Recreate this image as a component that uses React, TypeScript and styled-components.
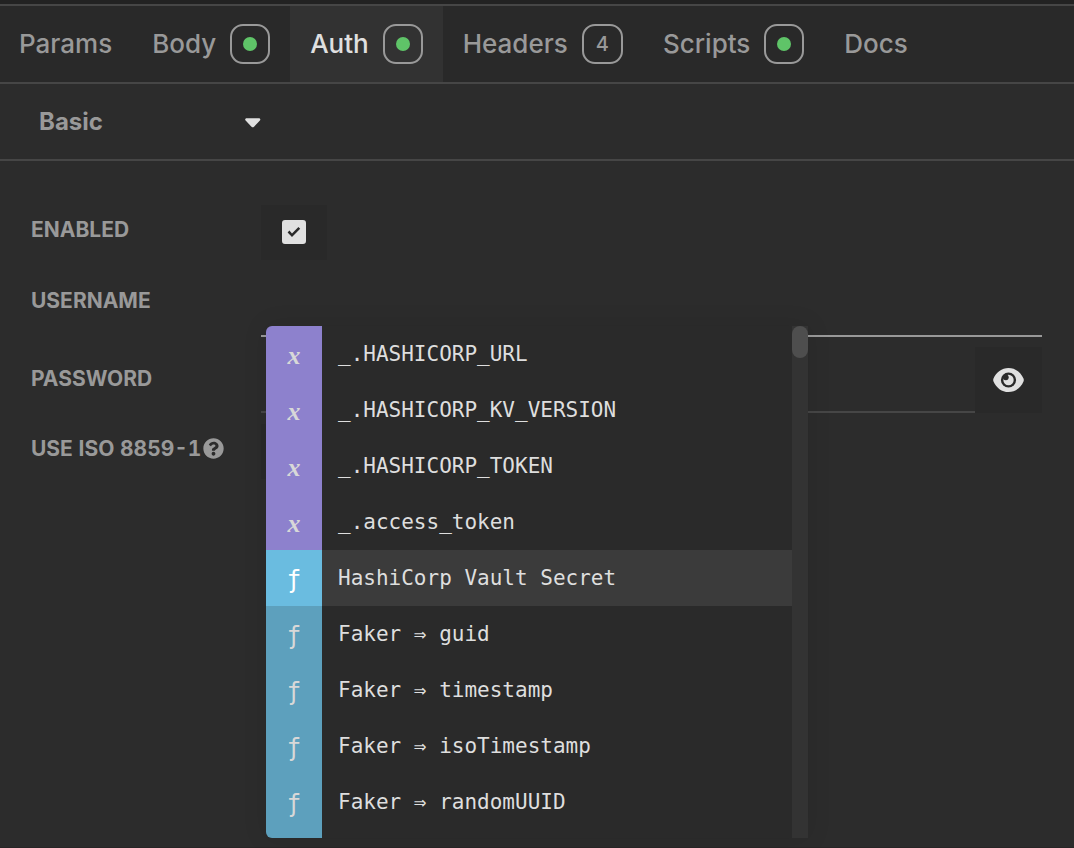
import React from "react";
import styled, { createGlobalStyle } from "styled-components";
import { FaQuestionCircle } from "react-icons/fa";

const ui = `Inter, "Liberation Sans", sans-serif`;
const mono = `"DejaVu Sans Mono", "Liberation Mono", monospace`;

const GlobalStyle = createGlobalStyle`
  *, *::before, *::after { box-sizing: border-box; }
  body { margin: 0; background: #2c2c2c; color: #999; font-family: ${ui}; }
  button, input, select { font: inherit; color: inherit; }
`;

const Pane = styled.main`
  display: flex;
  flex-direction: column;
  min-height: 100vh;
  background: #2c2c2c;
  border-top: 4px solid #222;
  border-bottom: 1px solid #282526;
`;

const TabBar = styled.nav`
  display: flex;
  height: 80px;
  flex: none;
  background: #292929;
  border-top: 2px solid #464646;
  border-bottom: 2px solid #464646;
`;

const Tab = styled.button<{ $active?: boolean }>`
  display: flex;
  align-items: center;
  gap: 14px;
  padding: 0 20px;
  border: 0;
  background: ${(p) => (p.$active ? "#323232" : "transparent")};
  color: ${(p) => (p.$active ? "#e0e0e0" : "#999")};
  font-size: 26px;
  font-weight: 500;
  line-height: 40px;
  white-space: nowrap;
  cursor: pointer;
  &:first-child { padding-left: 19px; }
`;

const Badge = styled.span<{ $count?: boolean }>`
  display: flex;
  align-items: center;
  justify-content: center;
  height: 40px;
  padding: 0 ${(p) => (p.$count ? 12 : 11)}px;
  border: 2px solid #999;
  border-radius: 13px;
  color: #999;
  font-size: 20px;
`;

const Dot = styled.span`
  flex: none;
  width: 14px;
  height: 14px;
  border-radius: 50%;
  background: #5fc468;
`;

const Toolbar = styled.div`
  display: flex;
  align-items: center;
  flex: none;
  height: 77px;
  padding-left: 39px;
  border-bottom: 2px solid #464646;
`;

const SelectWrap = styled.label`
  display: grid;
  grid-template-columns: 206px 16px;
  align-items: center;
`;

const AuthSelect = styled.select`
  grid-area: 1 / 1 / 2 / 3;
  appearance: none;
  padding: 0;
  border: 0;
  background: transparent;
  color: #999;
  font-size: 24px;
  font-weight: 700;
  line-height: 32px;
`;

const Caret = styled.svg`
  grid-area: 1 / 2;
  width: 16px;
  height: 12px;
  fill: #e0e0e0;
  pointer-events: none;
`;

const Form = styled.form`
  display: flex;
  flex-direction: column;
  padding: 44px 32px 0 31px;
`;

const Row = styled.div<{ $height: number; $gap?: number }>`
  display: grid;
  grid-template-columns: 230px 1fr;
  height: ${(p) => p.$height}px;
  margin-bottom: ${(p) => p.$gap ?? 0}px;
`;

const Label = styled.label<{ $height?: number }>`
  display: flex;
  align-items: center;
  align-self: start;
  gap: 2px;
  height: ${(p) => p.$height ?? 49}px;
  font-size: 21px;
  font-weight: 700;
  font-variant-numeric: tabular-nums;
  white-space: nowrap;
`;

const HelpIcon = styled(FaQuestionCircle)`
  width: 21px;
  height: 21px;
`;

const CheckCell = styled.span`
  display: flex;
  align-items: center;
  justify-content: center;
  width: 66px;
  height: 55px;
  padding-bottom: 1px;
  background: #292929;
`;

const Check = styled.input`
  appearance: none;
  width: 24px;
  height: 24px;
  margin: 0;
  border: 2px solid #e0e0e0;
  border-radius: 3px;
  display: grid;
  place-items: center;
  &:checked { background: #e0e0e0; }
  &:checked::before {
    content: "";
    width: 14px;
    height: 14px;
    background: #292929;
    clip-path: path("M0.6 7.6L2.4 5.6L5 8.4L11.4 2L13.2 3.8L5 12Z");
  }
`;

const Field = styled.div`
  position: relative;
  display: flex;
`;

const TextInput = styled.input<{ $focused?: boolean }>`
  flex: 1;
  min-width: 0;
  padding: 0 10px;
  border: 0;
  border-bottom: 2px solid ${(p) => (p.$focused ? "#999" : "#464646")};
  background: transparent;
  font-size: 21px;
  outline: none;
`;

const RevealButton = styled.button`
  display: flex;
  align-items: center;
  justify-content: center;
  width: 67px;
  padding: 0;
  border: 0;
  background: #292929;
  color: #e0e0e0;
`;

const EyeIcon = styled.svg`
  width: 31px;
  height: 24px;
`;

const Popup = styled.div`
  position: absolute;
  z-index: 1;
  top: 50px;
  left: 5px;
  display: flex;
  width: 542px;
  border-radius: 6px 0 0 6px;
  overflow: hidden;
  background: #2a2a2a;
  box-shadow: 0 0 24px rgba(0, 0, 0, 0.1);
`;

const Options = styled.ul`
  flex: 1;
  height: 512px;
  margin: 0;
  padding: 0;
  overflow: hidden;
  list-style: none;
`;

const Option = styled.li<{ $active?: boolean }>`
  display: flex;
  height: 56px;
  background: ${(p) => (p.$active ? "#3b3b3b" : "transparent")};
  color: #dedede;
  font-family: ${mono};
  font-size: 21px;
  line-height: 56px;
  white-space: pre;
`;

const Kind = styled.span<{ $kind: "x" | "f"; $active?: boolean }>`
  width: 56px;
  margin-right: 16px;
  background: ${(p) => (p.$kind === "x" ? "#8d81cd" : p.$active ? "#6abce0" : "#5da0bd")};
  color: ${(p) => (p.$active ? "#fff" : "#d8d8d8")};
  font-family: ${(p) => (p.$kind === "x" ? `"Liberation Serif", serif` : mono)};
  font-size: ${(p) => (p.$kind === "x" ? 26 : 24)}px;
  font-style: ${(p) => (p.$kind === "x" ? "italic" : "normal")};
  font-weight: ${(p) => (p.$kind === "x" ? 700 : 400)};
  line-height: 60px;
  text-align: center;
`;

const Filler = styled.li`
  width: 56px;
  height: 8px;
  background: #5da0bd;
`;

const Track = styled.div`
  width: 16px;
  background: #333;
`;

const Thumb = styled.div`
  height: 32px;
  border-radius: 8px;
  background: #4e4e4e;
`;

const tabs: { name: string; badge?: string }[] = [
  { name: "Params" },
  { name: "Body", badge: "dot" },
  { name: "Auth", badge: "dot" },
  { name: "Headers", badge: "4" },
  { name: "Scripts", badge: "dot" },
  { name: "Docs" },
];

const options: { kind: "x" | "f"; text: string }[] = [
  { kind: "x", text: "_.HASHICORP_URL" },
  { kind: "x", text: "_.HASHICORP_KV_VERSION" },
  { kind: "x", text: "_.HASHICORP_TOKEN" },
  { kind: "x", text: "_.access_token" },
  { kind: "f", text: "HashiCorp Vault Secret" },
  { kind: "f", text: "Faker ⇒ guid" },
  { kind: "f", text: "Faker ⇒ timestamp" },
  { kind: "f", text: "Faker ⇒ isoTimestamp" },
  { kind: "f", text: "Faker ⇒ randomUUID" },
];

export default function App() {
  return (
    <>
      <GlobalStyle />
      <Pane>
        <TabBar>
          {tabs.map((t) => (
            <Tab key={t.name} type="button" $active={t.name === "Auth"}>
              {t.name}
              {t.badge && (
                <Badge $count={t.badge !== "dot"}>{t.badge === "dot" ? <Dot /> : t.badge}</Badge>
              )}
            </Tab>
          ))}
        </TabBar>
        <Toolbar>
          <SelectWrap>
            <AuthSelect aria-label="Authentication type" defaultValue="Basic">
              <option>Basic</option>
            </AuthSelect>
            <Caret viewBox="0 -2 16 12" aria-hidden="true">
              <path d="M1.6 0.3H13.9C15.2 0.3 15.8 1.700 14.9 2.600L9 8.700C8.3 9.500 7.2 9.500 6.5 8.700L0.6 2.600C-0.3 1.700 0.3 0.3 1.6 0.3Z" />
            </Caret>
          </SelectWrap>
        </Toolbar>
        <Form>
          <Row $height={55} $gap={16}>
            <Label htmlFor="enabled">ENABLED</Label>
            <CheckCell>
              <Check id="enabled" type="checkbox" defaultChecked />
            </CheckCell>
          </Row>
          <Row $height={61} $gap={10}>
            <Label htmlFor="username">USERNAME</Label>
            <Field>
              <TextInput id="username" type="text" $focused />
              <Popup>
                <Options>
                  {options.map((o) => {
                    const active = o.text === "HashiCorp Vault Secret";
                    return (
                      <Option key={o.text} $active={active}>
                        <Kind $kind={o.kind} $active={active}>
                          {o.kind === "x" ? "x" : "ƒ"}
                        </Kind>
                        {o.text}
                      </Option>
                    );
                  })}
                  <Filler />
                </Options>
                <Track>
                  <Thumb />
                </Track>
              </Popup>
            </Field>
          </Row>
          <Row $height={66} $gap={11}>
            <Label htmlFor="password" $height={62}>
              PASSWORD
            </Label>
            <Field>
              <TextInput id="password" type="password" />
              <RevealButton type="button" aria-label="Show password">
                <EyeIcon viewBox="0 0 31 24" aria-hidden="true">
                  <path
                    fill="currentColor"
                    d="M15.5 0C8.8 0 3.2 4.3 0.5 10.6C0.1 11.5 0.1 12.5 0.5 13.4C3.2 19.7 8.8 24 15.5 24C22.2 24 27.8 19.7 30.5 13.4C30.9 12.5 30.9 11.5 30.5 10.6C27.8 4.3 22.2 0 15.5 0Z"
                  />
                  <circle cx="15.5" cy="12" r="7.6" fill="#292929" />
                  <circle cx="15.5" cy="12" r="5.2" fill="currentColor" />
                  <circle cx="12.8" cy="9.3" r="2.9" fill="#292929" />
                </EyeIcon>
              </RevealButton>
            </Field>
          </Row>
          <Row $height={55}>
            <Label htmlFor="iso">
              USE ISO 8859-1
              <HelpIcon />
            </Label>
            <CheckCell>
              <Check id="iso" type="checkbox" />
            </CheckCell>
          </Row>
        </Form>
      </Pane>
    </>
  );
}
